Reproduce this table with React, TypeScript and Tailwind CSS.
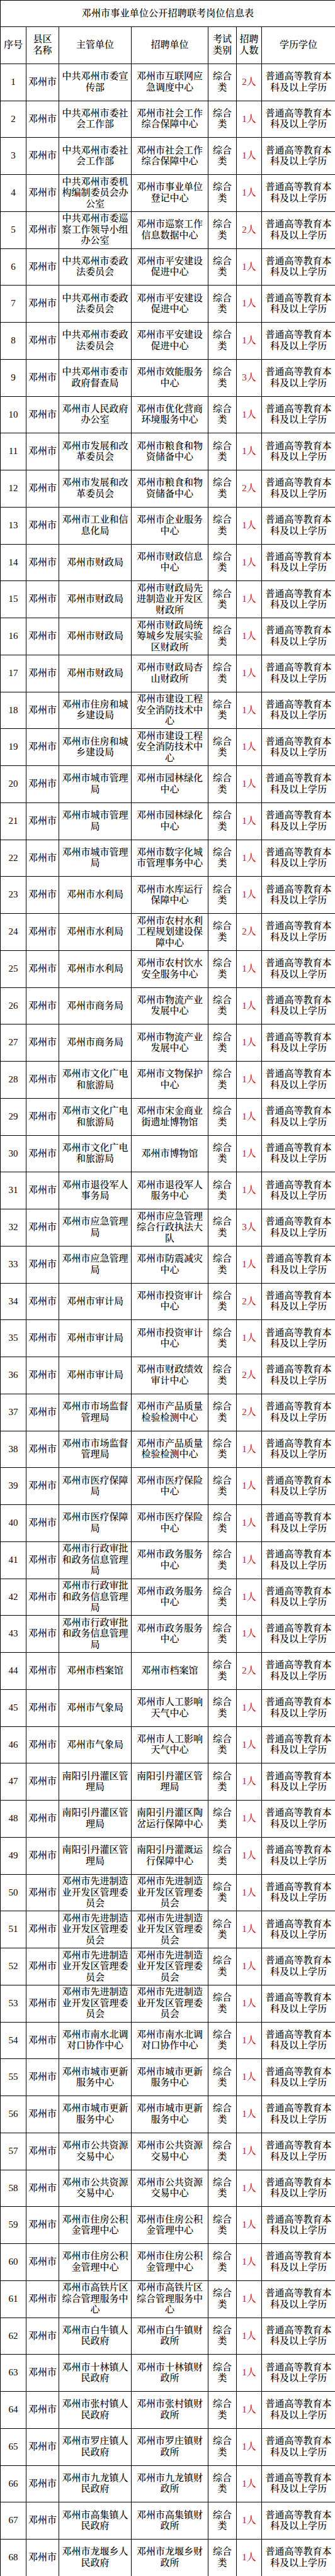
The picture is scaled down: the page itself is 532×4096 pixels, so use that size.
import React from "react";

type Row = [string, string, number];

const A = "中共邓州市委社会工作部";
const rows: Row[] = [
  ["中共邓州市委宣传部", "邓州市互联网应急调度中心", 2],
  [A, "邓州市社会工作综合保障中心", 1],
  [A, "邓州市社会工作综合保障中心", 1],
  ["中共邓州市委机构编制委员会办公室", "邓州市事业单位登记中心", 1],
  ["中共邓州市委巡察工作领导小组办公室", "邓州市巡察工作信息数据中心", 2],
  ["中共邓州市委政法委员会", "邓州市平安建设促进中心", 1],
  ["中共邓州市委政法委员会", "邓州市平安建设促进中心", 1],
  ["中共邓州市委政法委员会", "邓州市平安建设促进中心", 1],
  ["中共邓州市委市政府督查局", "邓州市效能服务中心", 3],
  ["邓州市人民政府办公室", "邓州市优化营商环境服务中心", 1],
  ["邓州市发展和改革委员会", "邓州市粮食和物资储备中心", 1],
  ["邓州市发展和改革委员会", "邓州市粮食和物资储备中心", 2],
  ["邓州市工业和信息化局", "邓州市企业服务中心", 1],
  ["邓州市财政局", "邓州市财政信息中心", 1],
  ["邓州市财政局", "邓州市财政局先进制造业开发区财政所", 1],
  ["邓州市财政局", "邓州市财政局统筹城乡发展实验区财政所", 1],
  ["邓州市财政局", "邓州市财政局杏山财政所", 1],
  ["邓州市住房和城乡建设局", "邓州市建设工程安全消防技术中心", 1],
  ["邓州市住房和城乡建设局", "邓州市建设工程安全消防技术中心", 1],
  ["邓州市城市管理局", "邓州市园林绿化中心", 1],
  ["邓州市城市管理局", "邓州市园林绿化中心", 1],
  ["邓州市城市管理局", "邓州市数字化城市管理事务中心", 1],
  ["邓州市水利局", "邓州市水库运行保障中心", 1],
  ["邓州市水利局", "邓州市农村水利工程规划建设保障中心", 2],
  ["邓州市水利局", "邓州市农村饮水安全服务中心", 1],
  ["邓州市商务局", "邓州市物流产业发展中心", 1],
  ["邓州市商务局", "邓州市物流产业发展中心", 1],
  ["邓州市文化广电和旅游局", "邓州市文物保护中心", 1],
  ["邓州市文化广电和旅游局", "邓州市宋金商业街遗址博物馆", 1],
  ["邓州市文化广电和旅游局", "邓州市博物馆", 1],
  ["邓州市退役军人事务局", "邓州市退役军人服务中心", 1],
  ["邓州市应急管理局", "邓州市应急管理综合行政执法大队", 3],
  ["邓州市应急管理局", "邓州市防震减灾中心", 1],
  ["邓州市审计局", "邓州市投资审计中心", 2],
  ["邓州市审计局", "邓州市投资审计中心", 1],
  ["邓州市审计局", "邓州市财政绩效审计中心", 2],
  ["邓州市市场监督管理局", "邓州市产品质量检验检测中心", 2],
  ["邓州市市场监督管理局", "邓州市产品质量检验检测中心", 1],
  ["邓州市医疗保障局", "邓州市医疗保险中心", 1],
  ["邓州市医疗保障局", "邓州市医疗保险中心", 1],
  ["邓州市行政审批和政务信息管理局", "邓州市政务服务中心", 1],
  ["邓州市行政审批和政务信息管理局", "邓州市政务服务中心", 1],
  ["邓州市行政审批和政务信息管理局", "邓州市政务服务中心", 1],
  ["邓州市档案馆", "邓州市档案馆", 2],
  ["邓州市气象局", "邓州市人工影响天气中心", 1],
  ["邓州市气象局", "邓州市人工影响天气中心", 1],
  ["南阳引丹灌区管理局", "南阳引丹灌区管理局", 1],
  ["南阳引丹灌区管理局", "南阳引丹灌区陶岔运行保障中心", 1],
  ["南阳引丹灌区管理局", "南阳引丹灌溉运行保障中心", 1],
  ["邓州市先进制造业开发区管理委员会", "邓州市先进制造业开发区管理委员会", 1],
  ["邓州市先进制造业开发区管理委员会", "邓州市先进制造业开发区管理委员会", 1],
  ["邓州市先进制造业开发区管理委员会", "邓州市先进制造业开发区管理委员会", 1],
  ["邓州市先进制造业开发区管理委员会", "邓州市先进制造业开发区管理委员会", 1],
  ["邓州市南水北调对口协作中心", "邓州市南水北调对口协作中心", 1],
  ["邓州市城市更新服务中心", "邓州市城市更新服务中心", 1],
  ["邓州市城市更新服务中心", "邓州市城市更新服务中心", 1],
  ["邓州市公共资源交易中心", "邓州市公共资源交易中心", 1],
  ["邓州市公共资源交易中心", "邓州市公共资源交易中心", 1],
  ["邓州市住房公积金管理中心", "邓州市住房公积金管理中心", 1],
  ["邓州市住房公积金管理中心", "邓州市住房公积金管理中心", 1],
  ["邓州市高铁片区综合管理服务中心", "邓州市高铁片区综合管理服务中心", 1],
  ["邓州市白牛镇人民政府", "邓州市白牛镇财政所", 1],
  ["邓州市十林镇人民政府", "邓州市十林镇财政所", 1],
  ["邓州市张村镇人民政府", "邓州市张村镇财政所", 1],
  ["邓州市罗庄镇人民政府", "邓州市罗庄镇财政所", 1],
  ["邓州市九龙镇人民政府", "邓州市九龙镇财政所", 1],
  ["邓州市高集镇人民政府", "邓州市高集镇财政所", 1],
  ["邓州市龙堰乡人民政府", "邓州市龙堰乡财政所", 1],
];

const td =
  "border border-black text-center align-middle px-[3px] py-0 leading-[17.5px] overflow-hidden";

export default function App() {
  return (
    <div className="w-[532px] bg-white text-black font-['Liberation_Serif','Noto_Serif_CJK_SC','Noto_Sans_CJK_SC',serif] text-[15px] font-medium">
      <table className="w-[532px] table-fixed border-collapse">
        <colgroup>
          <col className="w-[41px]" />
          <col className="w-[52px]" />
          <col className="w-[115px]" />
          <col className="w-[122px]" />
          <col className="w-[45px]" />
          <col className="w-[40px]" />
          <col className="w-[117px]" />
        </colgroup>
        <tbody>
          <tr className="h-[42px]">
            <td colSpan={7} className={td + " text-[15px] tracking-[0.2px]"}>
              邓州市事业单位公开招聘联考岗位信息表
            </td>
          </tr>
          <tr className="h-[58.75px]">
            <td className={td}>序号</td>
            <td className={td}>
              县区
              <br />
              名称
            </td>
            <td className={td}>主管单位</td>
            <td className={td}>招聘单位</td>
            <td className={td}>
              考试
              <br />
              类别
            </td>
            <td className={td + " px-0"}>
              招聘
              <br />
              人数
            </td>
            <td className={td}>学历学位</td>
          </tr>
          {rows.map((r, i) => (
            <tr key={i} className="h-[58.75px]">
              <td className={td + " px-0"}>{i + 1}</td>
              <td className={td + " px-0"}>邓州市</td>
              <td className={td}>{r[0]}</td>
              <td className={td}>{r[1]}</td>
              <td className={td}>综合类</td>
              <td className={td + " px-0 text-[#d01818]"}>{r[2]}人</td>
              <td className={td}>普通高等教育本科及以上学历</td>
            </tr>
          ))}
        </tbody>
      </table>
    </div>
  );
}
